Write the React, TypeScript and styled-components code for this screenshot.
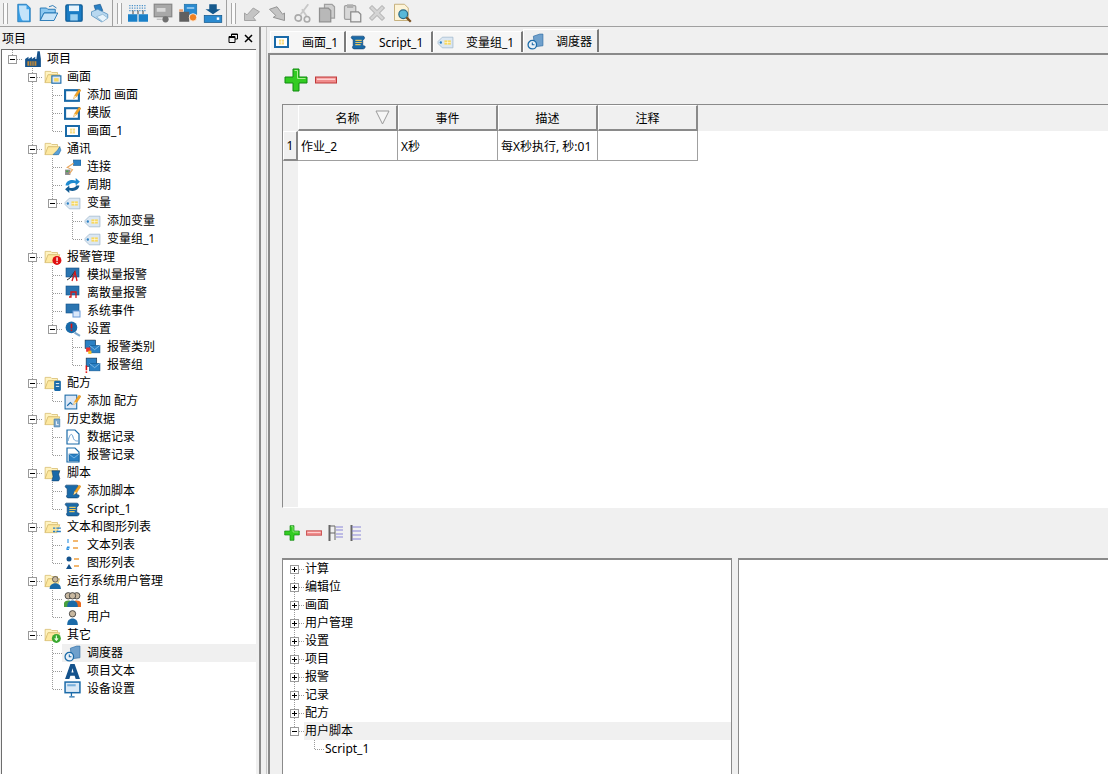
import React from "react";
import styled, { createGlobalStyle, css } from "styled-components";

const GlobalStyle = createGlobalStyle`
    html, body {
        margin: 0;
        padding: 0;
        background: #f0f0f0;
    }
    body {
        font-family: "Noto Sans", "Noto Sans CJK SC", sans-serif;
        font-size: 12px;
        color: #000;
    }
`;

const Page = styled.div`
    width: 1108px;
    height: 774px;
    display: flex;
    flex-direction: column;
    overflow: hidden;
    background: #f0f0f0;
`;

const Toolbar = styled.div`
    height: 27px;
    flex: none;
    display: flex;
    align-items: center;
    padding-left: 3px;
    box-sizing: border-box;
    border-bottom: 1px solid #a0a0a0;
`;

const Grip = styled.div`
    width: 5px;
    height: 21px;
    margin-right: 3px;
    border-left: 1px solid #a8a8a8;
    border-right: 1px solid #a8a8a8;
    box-sizing: border-box;
    background: #fafafa;
`;

const ToolButton = styled.div`
    width: 25px;
    height: 26px;
    display: flex;
    align-items: center;
    justify-content: center;
`;

const ToolSeparator = styled.div`
    width: 1px;
    height: 27px;
    margin: 0 4px 0 1px;
    background: #a0a0a0;
`;

const Main = styled.div`
    flex: 1;
    min-height: 0;
    display: flex;
`;

const LeftPanel = styled.div`
    width: 256px;
    flex: none;
    display: flex;
    flex-direction: column;
    padding-left: 1px;
    box-sizing: border-box;
`;

const PanelTitle = styled.div`
    height: 22px;
    flex: none;
    display: flex;
    align-items: center;
    justify-content: space-between;
    padding: 0 2px 0 1px;
`;

const PanelButtons = styled.div`
    display: flex;
    gap: 4px;
    align-items: center;
`;

const TreeBox = styled.div`
    flex: 1;
    min-height: 0;
    background: #fff;
    border-top: 1px solid #6d6d6d;
    border-left: 1px solid #6d6d6d;
    overflow: hidden;
`;

const VSplit = styled.div`
    width: 8px;
    flex: none;
    box-sizing: border-box;
    margin-left: 3px;
    border-left: 2px solid #8a8a8a;
    border-right: 1px solid #c8c8c8;
    background: #f0f0f0;
`;

const RightPanel = styled.div`
    flex: 1;
    min-width: 0;
    display: flex;
    flex-direction: column;
`;

const TabStrip = styled.div`
    height: 26px;
    flex: none;
    display: flex;
    align-items: flex-end;
    padding-bottom: 1px;
    box-sizing: border-box;
    margin-left: 3px;
`;

const Tab = styled.div<{ $width: number; $active?: boolean }>`
    width: ${(p) => p.$width}px;
    height: ${(p) => (p.$active ? 23 : 21)}px;
    flex: none;
    display: flex;
    align-items: center;
    box-sizing: border-box;
    padding-left: 3px;
    gap: 12px;
    border-right: 2px solid #7a7a7a;
    border-left: 1px solid #fff;
    border-top: 1px solid #fff;
    background: ${(p) => (p.$active ? "#f0f0f0" : "#f6f6f6")};
`;

const Pane = styled.div`
    flex: 1;
    min-height: 0;
    display: flex;
    flex-direction: column;
    margin-left: 1px;
    padding-left: 12px;
    box-sizing: border-box;
    border-top: 2px solid #8a8a8a;
    border-left: 2px solid #8a8a8a;
`;

const ActionBar = styled.div<{ $height: number; $gap: number }>`
    height: ${(p) => p.$height}px;
    flex: none;
    display: flex;
    align-items: center;
    gap: ${(p) => p.$gap}px;
    padding-left: 2px;
    box-sizing: border-box;
`;

const TableFrame = styled.div`
    height: 404px;
    flex: none;
    display: flex;
    flex-direction: column;
    box-sizing: border-box;
    border-top: 1px solid #8a8a8a;
    border-left: 1px solid #8a8a8a;
    border-bottom: 1px solid #fff;
    background: #fff;
`;

const HeaderRow = styled.div`
    height: 26px;
    flex: none;
    display: flex;
    background: #f0f0f0;
`;

const Corner = styled.div`
    width: 15px;
    flex: none;
`;

const HeaderCell = styled.div`
    width: 100px;
    flex: none;
    display: flex;
    align-items: center;
    justify-content: center;
    box-sizing: border-box;
    border-left: 1px solid #fff;
    border-top: 1px solid #fff;
    border-right: 2px solid #8a8a8a;
    border-bottom: 2px solid #8a8a8a;
    position: relative;
`;

const SortMark = styled.svg`
    position: absolute;
    right: 6px;
    top: 4px;
`;

const TableBody = styled.div`
    flex: 1;
    display: flex;
    min-height: 0;
`;

const RowGutter = styled.div`
    width: 15px;
    flex: none;
    background: #f0f0f0;
`;

const RowHead = styled.div`
    height: 30px;
    display: flex;
    align-items: center;
    justify-content: center;
    box-sizing: border-box;
    border-left: 1px solid #fff;
    border-top: 1px solid #fff;
    border-right: 2px solid #8a8a8a;
    border-bottom: 2px solid #8a8a8a;
`;

const DataRow = styled.div`
    height: 30px;
    display: flex;
`;

const DataCell = styled.div`
    width: 100px;
    flex: none;
    display: flex;
    align-items: center;
    padding-left: 3px;
    box-sizing: border-box;
    white-space: nowrap;
    overflow: hidden;
    background: #fff;
    border-right: 1px solid #a0a0a0;
    border-bottom: 1px solid #a0a0a0;
`;

const BottomSplit = styled.div`
    flex: 1;
    min-height: 0;
    display: flex;
`;

const ScriptTree = styled.div`
    width: 450px;
    flex: none;
    background: #fff;
    box-sizing: border-box;
    border-top: 2px solid #8a8a8a;
    border-left: 1px solid #8a8a8a;
    border-right: 1px solid #8a8a8a;
    padding-left: 1px;
`;

const ScriptPane = styled.div`
    flex: 1;
    margin-left: 6px;
    background: #fff;
    box-sizing: border-box;
    border-top: 2px solid #8a8a8a;
    border-left: 1px solid #8a8a8a;
`;

const RowWrap = styled.div`
    height: 18px;
    display: flex;
    white-space: nowrap;
`;

const dots = "repeating-linear-gradient";
const Cell = styled.div<{ $up?: boolean; $down?: boolean; $right?: boolean; $width?: number }>`
    width: ${(p) => p.$width ?? 20}px;
    height: 18px;
    flex: none;
    display: flex;
    align-items: center;
    justify-content: center;
    background-repeat: no-repeat;
    ${(p) => {
        const layers: string[] = [];
        if (p.$up || p.$down) {
            const h = p.$up && p.$down ? 18 : 9;
            const y = p.$up ? 0 : 9;
            layers.push(`${dots}(180deg, #9a9a9a 0 1px, transparent 1px 2px) 10px ${y}px / 1px ${h}px no-repeat`);
        }
        if (p.$right) {
            layers.push(`${dots}(90deg, #9a9a9a 0 1px, transparent 1px 2px) 11px 9px / 9px 1px no-repeat`);
        }
        return layers.length
            ? css`
                  background: ${layers.join(", ")};
              `
            : "";
    }}
`;

const Toggle = styled.div<{ $open: boolean }>`
    width: 9px;
    height: 9px;
    margin-left: 1px;
    box-sizing: border-box;
    border: 1px solid #9a9a9a;
    background: ${(p) =>
        p.$open
            ? "linear-gradient(#000, #000) center / 5px 1px no-repeat, #fff"
            : "linear-gradient(#000, #000) center / 5px 1px no-repeat, linear-gradient(#000, #000) center / 1px 5px no-repeat, #fff"};
`;

const RowBody = styled.div<{ $selected?: boolean; $plain?: boolean }>`
    flex: 1;
    min-width: 0;
    display: flex;
    align-items: center;
    background: ${(p) => (p.$selected ? "#f0f0f0" : "transparent")};
    padding-left: ${(p) => (p.$plain ? 1 : 0)}px;
`;

const IconSlot = styled.div`
    width: 21px;
    height: 18px;
    flex: none;
    display: flex;
    align-items: center;
    justify-content: center;
    margin-right: 4px;
`;

const Label = styled.span`
    line-height: 18px;
`;

// ---- icons ----

const S = ({ size = 16, children }: { size?: number; children: React.ReactNode }) => (
    <svg width={size} height={size} viewBox="0 0 16 16">
        {children}
    </svg>
);

const Folder = ({ children }: { children?: React.ReactNode }) => (
    <S size={18}>
        <path d="M1 3h5l1 1h5v2H4L1 13z" fill="#fff3c0" stroke="#d8bd70" strokeWidth=".7" />
        <path d="M1 13l2.500-7H14l-2.500 7z" fill="#fde8a0" stroke="#d8bd70" strokeWidth=".7" />
        {children}
    </S>
);

const BlueFrame = () => (
    <rect x="1" y="3" width="13" height="10" fill="#fff" stroke="#1a6aa8" strokeWidth="2" />
);

const Pencil = () => (
    <>
        <path d="M9 11l1-3 4-6 2 1-4 6z" fill="#f6a623" stroke="#c87a10" strokeWidth=".4" />
        <path d="M9 11l1-3 2 1.200z" fill="#fbe3a8" />
    </>
);

const Mail = ({ x = 3, y = 5 }: { x?: number; y?: number }) => (
    <>
        <rect x={x} y={y} width="10" height="7" fill="#2a80c4" stroke="#125a94" strokeWidth=".6" />
        <path d={`M${x} ${y}l5 4 5-4`} fill="none" stroke="#a8d4f4" strokeWidth=".6" />
    </>
);

const Scroll = ({ lines = true }: { lines?: boolean }) => (
    <>
        <path d="M2 2h10c2 0 2 2 1 3l-1 1v5c1 0 3 0 2 2-.500 1-1 1-2 1H4c-2 0-2-2-1-3V5C2 5 0 3 2 2z" fill="#1a6aa8" stroke="#0d3f6e" strokeWidth=".6" />
        {lines && <path d="M5 6h6M5 8h6M5 10h5" stroke="#e8c860" strokeWidth="1" />}
    </>
);

const Tag = () => (
    <>
        <path d="M5 3h10v10H5L1 9V7z" fill="#dbe7f2" stroke="#9cb6cc" strokeWidth=".7" />
        <circle cx="3.600" cy="8" r="1.100" fill="#2a80c4" />
        <path d="M7 6h6v4H7z" fill="#f8d860" />
        <path d="M7 8h6M10 6v4" stroke="#fff" strokeWidth=".5" />
    </>
);

const Person = ({ x = 0, color = "#1a6aa8" }: { x?: number; color?: string }) => (
    <g transform={`translate(${x} 0)`}>
        <circle cx="8" cy="4.500" r="3" fill="#c8b8a0" stroke="#3a3a3a" strokeWidth=".8" />
        <path d="M3 15c0-4 2-6 5-6s5 2 5 6z" fill={color} />
    </g>
);

const Clock = () => (
    <>
        <path d="M6 3l6-2h3v11l-8 1z" fill="#6fa0cc" stroke="#2a6aa0" strokeWidth=".6" />
        <circle cx="5" cy="11" r="4" fill="#e8f0f8" stroke="#1a6aa8" strokeWidth="1.200" />
        <path d="M5 9v2h2" fill="none" stroke="#1a6aa8" />
    </>
);

const ScreenIcon = () => (
    <S>
        <BlueFrame />
        <path d="M5 5.500h5v5H5z" fill="#f8dc80" />
        <path d="M5 8h5M7.500 5.500v5" stroke="#fff" strokeWidth=".6" />
    </S>
);

const Plus = ({ size }: { size: number }) => (
    <svg width={size} height={size} viewBox="0 0 24 24">
        <path d="M9 1h6v8h8v6h-8v8H9v-8H1V9h8z" fill="#33cc22" stroke="#118a10" strokeWidth="1" />
        <path d="M10.500 2.500h3v8h8" fill="none" stroke="#a8f090" strokeWidth="1" />
    </svg>
);

const Minus = ({ width }: { width: number }) => (
    <svg width={width} height={8} viewBox="0 0 22 7">
        <rect x=".5" y=".5" width="21" height="6" fill="#f08c8c" stroke="#c03a3a" />
        <rect x="2" y="2" width="18" height="1.500" fill="#ffd0d0" />
    </svg>
);

const treeIcons: Record<string, React.ReactNode> = {
    factory: (
        <S size={18}>
            <path d="M1 15V8l3-2v2l3-2v2l3-2v2h1l1-7h2l1 7v7z" fill="#14528c" />
            <path d="M3 10h8v4H3z" fill="#c08a3a" />
            <path d="M5 10v4M7 10v4M9 10v4" stroke="#14528c" strokeWidth=".7" />
        </S>
    ),
    folderScreen: (
        <Folder>
            <rect x="7" y="7" width="8" height="6.500" fill="#dbe9f6" stroke="#1a6aa8" />
            <rect x="9" y="9" width="4" height="3" fill="#f8d860" />
        </Folder>
    ),
    folderComm: (
        <Folder>
            <path d="M8 13l4-4 2-3 1 3-2 4z" fill="#5aa0d8" stroke="#1a6aa8" strokeWidth=".5" />
        </Folder>
    ),
    folderAlarm: (
        <Folder>
            <circle cx="11.500" cy="11" r="4" fill="#e01010" />
            <rect x="11" y="8.300" width="1.200" height="3.200" fill="#fff" />
            <rect x="11" y="12.300" width="1.200" height="1.200" fill="#fff" />
        </Folder>
    ),
    folderRecipe: (
        <Folder>
            <rect x="9" y="6" width="6" height="9" rx="1" fill="#1a6aa8" />
            <path d="M10.500 8.500h3M10.500 11h3" stroke="#fff" strokeWidth=".8" />
        </Folder>
    ),
    folderHistory: (
        <Folder>
            <path d="M9 8h5v7H9z" fill="#7ea8cc" stroke="#3a78a8" strokeWidth=".6" />
            <path d="M11 10v3h2" fill="none" stroke="#fff" strokeWidth=".8" />
        </Folder>
    ),
    folderScript: (
        <Folder>
            <path d="M7 6h7l-1 3 1 4-1 2H7l1-4z" fill="#1a6aa8" stroke="#0d3f6e" strokeWidth=".5" />
        </Folder>
    ),
    folderList: (
        <Folder>
            <path d="M8 9h2M11 9h4M8 12h2M11 12h4" stroke="#2a80c4" strokeWidth="1.300" />
        </Folder>
    ),
    folderUser: (
        <Folder>
            <circle cx="10" cy="6.500" r="2.500" fill="#c8b8a0" stroke="#333" strokeWidth=".6" />
            <path d="M5 15c0-3 2-5 5-5s5 2 5 5z" fill="#1a6aa8" />
        </Folder>
    ),
    folderOther: (
        <Folder>
            <circle cx="11" cy="11" r="4" fill="#3aa830" />
            <path d="M11 8.500v4M9.500 11l1.500 1.700 1.500-1.700" fill="none" stroke="#e8ffe0" />
        </Folder>
    ),
    pencilFrame: (
        <S size={17}>
            <BlueFrame />
            <Pencil />
        </S>
    ),
    screen: <ScreenIcon />,
    connect: (
        <S size={17}>
            <rect x="9" y="1" width="7" height="5" fill="#2a80c4" stroke="#125a94" strokeWidth=".6" />
            <rect x="1" y="10" width="5" height="5" fill="#8a8a8a" />
            <rect x="2" y="11" width="2" height="1" fill="#30b030" />
            <path d="M9 4L3 8l5 2-3 4" fill="none" stroke="#e8a860" />
        </S>
    ),
    cycle: (
        <S size={17}>
            <path d="M1.500 8C2 3.500 7 2 11 3.500V1l4 3.500L11 8V6C8 5 5 6 4.500 8z" fill="#1e8ad0" />
            <path d="M14.500 8C14 12.500 9 14 5 12.500V15l-4-3.500L5 8v2c3 1 6 0 6.500-2z" fill="#135c94" />
        </S>
    ),
    tag: (
        <S size={17}>
            <Tag />
        </S>
    ),
    analog: (
        <S>
            <rect x="1" y="1" width="13" height="9" fill="#2a74b0" stroke="#124f86" strokeWidth=".6" />
            <path d="M2 13l3-2 5-7" fill="none" stroke="#333" />
            <path d="M7 14l3-9 2 9" fill="none" stroke="#d81818" strokeWidth="1.300" />
        </S>
    ),
    discrete: (
        <S>
            <rect x="1" y="1" width="13" height="9" fill="#2a74b0" stroke="#124f86" strokeWidth=".6" />
            <path d="M4 12h2V7h5v6" fill="none" stroke="#d81818" strokeWidth="1.300" />
        </S>
    ),
    system: (
        <S>
            <rect x="1" y="1" width="13" height="9" fill="#2a74b0" stroke="#124f86" strokeWidth=".6" />
            <rect x="8" y="8" width="7" height="6" fill="#dbe8fa" stroke="#6a9ad8" />
        </S>
    ),
    alarmGear: (
        <S size={17}>
            <circle cx="7" cy="6" r="5.500" fill="#1a6aa8" />
            <rect x="6.300" y="2.500" width="1.500" height="4.500" fill="#e01010" />
            <rect x="6.300" y="8" width="1.500" height="1.500" fill="#e01010" />
            <path d="M10 11l5 3" stroke="#7ea8cc" strokeWidth="2" />
        </S>
    ),
    alarmClass: (
        <S size={17}>
            <rect x="1" y="1" width="10" height="8" fill="#2a80c4" stroke="#123" strokeWidth=".5" />
            <Mail x={5} y={6} />
            <rect x="2" y="8" width="4" height="4" fill="#e83030" />
            <rect x="4" y="11" width="3" height="3" fill="#f8c020" />
        </S>
    ),
    alarmGroup: (
        <S size={17}>
            <rect x="2" y="1" width="10" height="8" fill="#2a80c4" stroke="#123" strokeWidth=".5" />
            <Mail x={5} y={6} />
            <rect x="1.500" y="8" width="1.500" height="4.500" fill="#e01010" />
            <rect x="1.500" y="13.500" width="1.500" height="1.500" fill="#e01010" />
        </S>
    ),
    recipeAdd: (
        <S size={17}>
            <rect x="1" y="2" width="11" height="13" fill="#dbe7f6" stroke="#1a6aa8" />
            <path d="M3 12l3-3 2 2" fill="none" stroke="#1a6aa8" />
            <Pencil />
        </S>
    ),
    dataLog: (
        <S>
            <path d="M2 1h8l4 4v10H2z" fill="#fff" stroke="#1a6aa8" strokeWidth="1.200" />
            <path d="M3 12c2-8 4-8 5-4s3 4 5 4" fill="none" stroke="#6aa0d0" />
        </S>
    ),
    alarmLog: (
        <S>
            <path d="M2 1h8l4 4v10H2z" fill="#fff" stroke="#1a6aa8" strokeWidth="1.200" />
            <Mail x={4} y={7} />
        </S>
    ),
    scriptAdd: (
        <S size={17}>
            <Scroll lines={false} />
            <Pencil />
        </S>
    ),
    script: (
        <S size={17}>
            <Scroll />
        </S>
    ),
    textList: (
        <S>
            <path d="M3 2v4M2 10h2v1H2v1.500h2" fill="none" stroke="#2a90e0" strokeWidth="1.100" />
            <path d="M8 4h5M8 11h5" stroke="#f0a040" strokeWidth="1.500" />
        </S>
    ),
    graphicList: (
        <S>
            <circle cx="4" cy="4" r="2.500" fill="#14528c" />
            <path d="M1 14l3-5 3 5z" fill="#14528c" />
            <path d="M9 4h5M9 11h5" stroke="#f0a040" strokeWidth="1.500" />
        </S>
    ),
    group: (
        <S size={17}>
            <Person x={-4} color="#4aa040" />
            <Person x={4} color="#e86a20" />
            <Person />
        </S>
    ),
    user: (
        <S size={17}>
            <Person />
        </S>
    ),
    clock: (
        <S size={17}>
            <Clock />
        </S>
    ),
    textA: (
        <S size={17}>
            <path d="M1 15L6 1h4l5 14h-4l-1-3H6l-1 3zM7 9h2L8 5z" fill="#14528c" fillRule="evenodd" />
        </S>
    ),
    device: (
        <S size={17}>
            <rect x="1" y="1" width="14" height="10" fill="#dbe9f6" stroke="#1a6aa8" strokeWidth="1.400" />
            <path d="M3 3h8v2H3z" fill="#7ab0dc" />
            <path d="M7 11v3M5 15h5" stroke="#1a6aa8" strokeWidth="1.200" />
        </S>
    ),
};

const toolIcons: React.ReactNode[][] = [
    [
        <S key="new" size={20}>
            <path d="M3 1h7l3 3v11H3z" fill="#3aa0e8" stroke="#1a70b0" strokeWidth=".6" />
            <path d="M4 2h6v3h2v9H7C5 12 4 7 4 2z" fill="#c4e4fa" />
        </S>,
        <S key="open" size={20}>
            <path d="M1 4h5l1 1h6v3H4l-3 6z" fill="#8cc8f0" stroke="#1a70b0" strokeWidth=".7" />
            <path d="M1 14l3-6h11l-3 6z" fill="#c8e4f8" stroke="#1a70b0" strokeWidth=".7" />
            <path d="M8 3l3-1 3 2" fill="none" stroke="#1a70b0" strokeWidth=".7" />
        </S>,
        <S key="save" size={20}>
            <rect x="1.500" y="1.500" width="13" height="13" rx="1" fill="#1a7cc4" stroke="#0d5a94" />
            <rect x="4" y="2" width="8" height="4.500" fill="#e8f4fc" />
            <rect x="5" y="9" width="6" height="5" fill="#9cd0f0" />
        </S>,
        <S key="print" size={20}>
            <path d="M4 2l5-1 2 5-5 2z" fill="#2a80c4" stroke="#124f86" strokeWidth=".5" />
            <path d="M2 7l5-2 8 4v3l-5 3-8-5z" fill="#b8d8f0" stroke="#4a88b8" strokeWidth=".6" />
            <path d="M6 11l5-2 4 3-4 3z" fill="#e8f4fc" stroke="#7aa8c8" strokeWidth=".5" />
        </S>,
    ],
    [
        <S key="grid" size={20}>
            <path d="M1 2h14M1 4h14M1 6h14" stroke="#4a90c8" strokeDasharray="1 1" />
            <path d="M4 6v3M8 6v3M12 6v3" stroke="#666" />
            <rect x="0" y="9" width="7.500" height="6" fill="#1a80c8" />
            <rect x="8.500" y="9" width="7.500" height="6" fill="#1a80c8" />
        </S>,
        <S key="sim" size={20}>
            <rect x="1" y="1" width="14" height="10" fill="#a8a8a8" stroke="#888" />
            <rect x="3" y="4" width="7" height="3" fill="#d8d8d8" />
            <circle cx="10" cy="13" r="2.500" fill="#707070" />
            <path d="M3 13h4" stroke="#bbb" />
        </S>,
        <S key="run" size={20}>
            <rect x="5" y="1" width="10" height="8" fill="#2a8ad0" stroke="#1a6aa0" strokeWidth=".5" />
            <path d="M7 4h6" stroke="#bfe0f8" />
            <path d="M1 7h8v8H1z" fill="#606060" />
            <path d="M1 5h3v2H1z" fill="#e8a070" />
            <circle cx="12" cy="11.500" r="3" fill="#f08020" stroke="#fff" strokeWidth=".6" />
        </S>,
        <S key="down" size={20}>
            <path d="M5 1h6v4h3L8 9 2 5h3z" fill="#14588c" />
            <rect x="1" y="10" width="14" height="5.500" fill="#2a8ad0" stroke="#14588c" strokeWidth=".6" />
            <rect x="11" y="11.500" width="2" height="2" fill="#fff" />
        </S>,
    ],
    [
        <S key="undo" size={20}>
            <path d="M2 14V8l2 1.500L9 4l5 3-5 4.500L11 14z" fill="#c4c4c4" stroke="#9a9a9a" strokeWidth=".7" />
        </S>,
        <S key="redo" size={20}>
            <path d="M14 14V8l-1.500 1L8 3 2 5l5 5-2 1.500L14 14z" fill="#c4c4c4" stroke="#8a8a8a" strokeWidth=".7" />
        </S>,
        <S key="cut" size={20}>
            <path d="M13 1L7 9M8 5l4 6" stroke="#c8c8c8" strokeWidth="1.500" />
            <circle cx="5" cy="12" r="2.500" fill="none" stroke="#aaa" strokeWidth="1.300" />
            <circle cx="12" cy="13" r="2.200" fill="none" stroke="#aaa" strokeWidth="1.300" />
        </S>,
        <S key="copy" size={20}>
            <path d="M6 1h6l2 2v9H6z" fill="#cfcfcf" stroke="#a0a0a0" />
            <path d="M2 4h7l2 2v9H2z" fill="#b8b8b8" stroke="#909090" />
        </S>,
        <S key="paste" size={20}>
            <rect x="2" y="2" width="9" height="11" rx="1" fill="#d8d8d8" stroke="#a0a0a0" />
            <rect x="4" y="1" width="5" height="3" fill="#b0b0b0" />
            <path d="M7 7h6l2 2v6H7z" fill="#efefef" stroke="#8a8a8a" />
        </S>,
        <S key="delete" size={20}>
            <path d="M2 4l2-2 4 4 4-4 2 2-4 4 4 4-2 2-4-4-4 4-2-2 4-4z" fill="#d4d4d4" stroke="#a0a0a0" strokeWidth=".7" />
        </S>,
        <S key="find" size={20}>
            <path d="M2 1h8l3 3v10H2z" fill="#fdf4d8" stroke="#c0a870" strokeWidth=".7" />
            <circle cx="9" cy="9" r="3.500" fill="#58b8d8" stroke="#2a6a88" />
            <path d="M11.500 11.500L15 15" stroke="#7a5020" strokeWidth="1.800" />
        </S>,
    ],
];

// ---- tree data ----

type Node = {
    text: string;
    icon?: string;
    open?: boolean;
    closed?: boolean;
    selected?: boolean;
    children?: Node[];
};

const projectTree: Node[] = [
    {
        text: "项目",
        icon: "factory",
        open: true,
        children: [
            {
                text: "画面",
                icon: "folderScreen",
                open: true,
                children: [
                    { text: "添加 画面", icon: "pencilFrame" },
                    { text: "模版", icon: "pencilFrame" },
                    { text: "画面_1", icon: "screen" },
                ],
            },
            {
                text: "通讯",
                icon: "folderComm",
                open: true,
                children: [
                    { text: "连接", icon: "connect" },
                    { text: "周期", icon: "cycle" },
                    {
                        text: "变量",
                        icon: "tag",
                        open: true,
                        children: [
                            { text: "添加变量", icon: "tag" },
                            { text: "变量组_1", icon: "tag" },
                        ],
                    },
                ],
            },
            {
                text: "报警管理",
                icon: "folderAlarm",
                open: true,
                children: [
                    { text: "模拟量报警", icon: "analog" },
                    { text: "离散量报警", icon: "discrete" },
                    { text: "系统事件", icon: "system" },
                    {
                        text: "设置",
                        icon: "alarmGear",
                        open: true,
                        children: [
                            { text: "报警类别", icon: "alarmClass" },
                            { text: "报警组", icon: "alarmGroup" },
                        ],
                    },
                ],
            },
            {
                text: "配方",
                icon: "folderRecipe",
                open: true,
                children: [{ text: "添加 配方", icon: "recipeAdd" }],
            },
            {
                text: "历史数据",
                icon: "folderHistory",
                open: true,
                children: [
                    { text: "数据记录", icon: "dataLog" },
                    { text: "报警记录", icon: "alarmLog" },
                ],
            },
            {
                text: "脚本",
                icon: "folderScript",
                open: true,
                children: [
                    { text: "添加脚本", icon: "scriptAdd" },
                    { text: "Script_1", icon: "script" },
                ],
            },
            {
                text: "文本和图形列表",
                icon: "folderList",
                open: true,
                children: [
                    { text: "文本列表", icon: "textList" },
                    { text: "图形列表", icon: "graphicList" },
                ],
            },
            {
                text: "运行系统用户管理",
                icon: "folderUser",
                open: true,
                children: [
                    { text: "组", icon: "group" },
                    { text: "用户", icon: "user" },
                ],
            },
            {
                text: "其它",
                icon: "folderOther",
                open: true,
                children: [
                    { text: "调度器", icon: "clock", selected: true },
                    { text: "项目文本", icon: "textA" },
                    { text: "设备设置", icon: "device" },
                ],
            },
        ],
    },
];

const functionTree: Node[] = [
    { text: "计算", closed: true },
    { text: "编辑位", closed: true },
    { text: "画面", closed: true },
    { text: "用户管理", closed: true },
    { text: "设置", closed: true },
    { text: "项目", closed: true },
    { text: "报警", closed: true },
    { text: "记录", closed: true },
    { text: "配方", closed: true },
    { text: "用户脚本", open: true, selected: true, children: [{ text: "Script_1" }] },
];

function TreeRows({
    nodes,
    guides,
    rootStub,
}: {
    nodes: Node[];
    guides: boolean[];
    rootStub?: boolean;
}) {
    return (
        <>
            {nodes.map((node, i) => {
                const isLast = i === nodes.length - 1;
                const hasUp = i > 0 || guides.length > 0 || !!rootStub;
                return (
                    <React.Fragment key={node.text + i}>
                        <RowWrap>
                            {guides.map((on, g) => (
                                <Cell key={g} $up={on} $down={on} />
                            ))}
                            <Cell $up={hasUp} $down={!isLast} $right>
                                {(node.open || node.closed) && <Toggle $open={!!node.open} />}
                            </Cell>
                            <RowBody $selected={node.selected} $plain={!node.icon}>
                                {node.icon && <IconSlot>{treeIcons[node.icon]}</IconSlot>}
                                <Label>{node.text}</Label>
                            </RowBody>
                        </RowWrap>
                        {node.children && (
                            <TreeRows nodes={node.children} guides={[...guides, !isLast]} />
                        )}
                    </React.Fragment>
                );
            })}
        </>
    );
}

const tabs = [
    { text: "画面_1", width: 76, icon: <ScreenIcon /> },
    { text: "Script_1", width: 87, icon: treeIcons.script },
    { text: "变量组_1", width: 90, icon: treeIcons.tag },
    { text: "调度器", width: 76, icon: treeIcons.clock, active: true },
];

const headers = ["名称", "事件", "描述", "注释"];
const row = ["作业_2", "X秒", "每X秒执行, 秒:01", ""];

export default function App() {
    return (
        <Page>
            <GlobalStyle />
            <Toolbar>
                {toolIcons.map((group, g) => (
                    <React.Fragment key={g}>
                        <Grip />
                        {group.map((icon, i) => (
                            <ToolButton key={i}>{icon}</ToolButton>
                        ))}
                        {g < 2 && <ToolSeparator />}
                    </React.Fragment>
                ))}
            </Toolbar>
            <Main>
                <LeftPanel>
                    <PanelTitle>
                        <span>项目</span>
                        <PanelButtons>
                            <svg width="11" height="11" viewBox="0 0 11 11">
                                <path d="M3.500 3V1h6v5H7M1 3.500h6v6H1zM1 4.500h6" fill="none" stroke="#000" />
                                <path d="M3.500 1.500h6" stroke="#000" />
                            </svg>
                            <svg width="11" height="11" viewBox="0 0 11 11">
                                <path d="M2 2l7 7M9 2l-7 7" stroke="#000" strokeWidth="1.500" />
                            </svg>
                        </PanelButtons>
                    </PanelTitle>
                    <TreeBox>
                        <TreeRows nodes={projectTree} guides={[]} rootStub />
                    </TreeBox>
                </LeftPanel>
                <VSplit />
                <RightPanel>
                    <TabStrip>
                        {tabs.map((t) => (
                            <Tab key={t.text} $width={t.width} $active={t.active}>
                                {t.icon}
                                <span>{t.text}</span>
                            </Tab>
                        ))}
                    </TabStrip>
                    <Pane>
                        <ActionBar $height={49} $gap={7}>
                            <Plus size={24} />
                            <Minus width={22} />
                        </ActionBar>
                        <TableFrame>
                            <HeaderRow>
                                <Corner />
                                {headers.map((h, i) => (
                                    <HeaderCell key={h}>
                                        {h}
                                        {i === 0 && (
                                            <SortMark width="15" height="15" viewBox="0 0 15 15">
                                                <path d="M1 1h13L7.500 14z" fill="#f6f6f6" stroke="#9a9a9a" />
                                            </SortMark>
                                        )}
                                    </HeaderCell>
                                ))}
                            </HeaderRow>
                            <TableBody>
                                <RowGutter>
                                    <RowHead>1</RowHead>
                                </RowGutter>
                                <DataRow>
                                    {row.map((c, i) => (
                                        <DataCell key={i}>{c}</DataCell>
                                    ))}
                                </DataRow>
                            </TableBody>
                        </TableFrame>
                        <ActionBar $height={50} $gap={6}>
                            <Plus size={16} />
                            <Minus width={16} />
                            <svg width="16" height="18" viewBox="0 0 16 18">
                                <path d="M1.500 1v16" stroke="#666" strokeWidth="2" />
                                <path d="M2 2h5M2 9h5M7 2v14" stroke="#666" />
                                <path d="M8 3h7M8 6h7M8 10h7M8 13h7" stroke="#8a86d8" />
                            </svg>
                            <svg width="12" height="18" viewBox="0 0 12 18">
                                <path d="M1.500 1v16" stroke="#666" strokeWidth="2" />
                                <path d="M2 3h9M2 7h9M2 11h9M2 15h9" stroke="#8a86d8" />
                            </svg>
                        </ActionBar>
                        <BottomSplit>
                            <ScriptTree>
                                <TreeRows nodes={functionTree} guides={[]} />
                            </ScriptTree>
                            <ScriptPane />
                        </BottomSplit>
                    </Pane>
                </RightPanel>
            </Main>
        </Page>
    );
}
